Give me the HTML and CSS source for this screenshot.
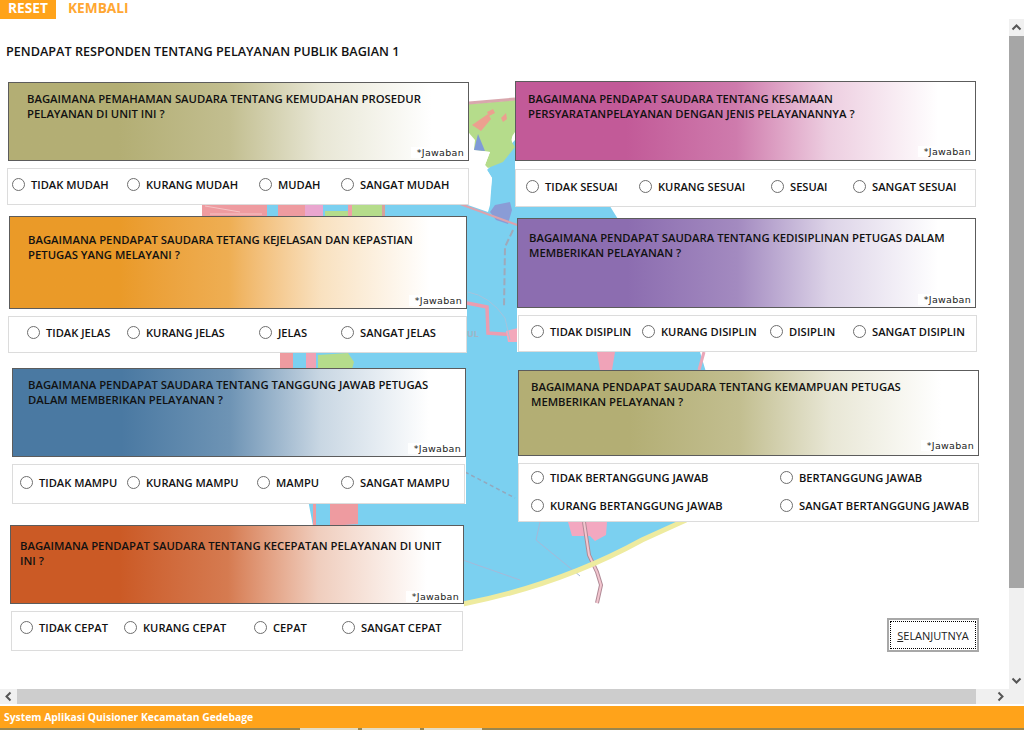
FILE: index.html
```html
<!DOCTYPE html>
<html lang="en">
<head>
    <meta charset="UTF-8">
    <title>Quisioner Kecamatan Gedebage</title>
    <link rel="stylesheet" href="styles.css">
</head>
<body>
    <div class="app">
        <div class="topbar">
            <a class="btn-reset">RESET</a>
            <a class="btn-back">KEMBALI</a>
        </div>
        <div class="work">
            <main class="page">
                <!-- peta di belakang form -->
                <svg class="map" viewBox="0 19 1009 670" width="1009" height="670" aria-hidden="true">
                    <path fill="#7bd0f0" d="M262 203 L608 203 L700 352 L706 372 L686 522 L640 540 Q560 585 463 604 L313 604 L313 526 L280 352 Z"/>
                    <path fill="#7bd0f0" d="M487 170 L515 140 L520 140 L520 230 L488 212 L492 178 Z"/>
                    <path fill="#b5dc8b" d="M469 104 L515 100 L515 132 Q508 140 515 147 L503 162 L488 168 L485 165 L490 152 L474 150 L469 133 Z"/>
                    <g fill="#eca08f">
                        <path d="M472 125 L488 114 L491 119 L481 131 Z"/>
                        <path d="M487 112 L493 109 L495 113 L489 116 Z"/>
                        <path d="M501 118 L506 113 L507 119 L503 122 Z"/>
                    </g>
                    <path fill="#ffffff" d="M469 133 L475 140 L474 150 L490 152 L485 165 L487 170 L492 178 L490 205 L488 212 L462 203 L462 133 Z"/>
                    <path fill="#7f9ad8" d="M474 150 L478 134 L485 151 Z"/>
                    <path fill="#8a9cd6" d="M490 212 L495 205 L510 202 L512 210 L508 224 L496 220 Z"/>
                    <path fill="none" stroke="#d9a7ad" stroke-width="3" d="M469 103 L515 99"/>
                    <path fill="none" stroke="#dca2ad" stroke-width="2" d="M460 204 L520 226"/>

                    <!-- potongan atas, y 205-216 -->
                    <rect x="202" y="203" width="65" height="14" fill="#ee9ba0"/>
                    <rect x="278" y="203" width="27" height="14" fill="#ee9ba0"/>
                    <rect x="305" y="203" width="18" height="14" fill="#e9a6cf"/>
                    <rect x="325" y="211" width="23" height="6" fill="#b5dc8b"/>
                    <rect x="348" y="203" width="4" height="14" fill="#ef9fa6"/>
                    <rect x="352" y="203" width="30" height="14" fill="#b5dc8b"/>
                    <rect x="382" y="203" width="3" height="14" fill="#d8a19b"/>
                    <path fill="none" stroke="#f5c4c6" stroke-width="1" d="M205 206 L240 212 M210 214 L262 214"/>

                    <!-- potongan tengah, y 353-368 -->
                    <rect x="280" y="352" width="13" height="17" fill="#ee9ba0"/>
                    <rect x="306" y="352" width="10" height="17" fill="#f0a2b4"/>
                    <path fill="#b5dc8b" d="M318 355 L348 353 L354 362 L352 369 L318 369 Z"/>
                    <path fill="#f0a3b8" d="M597 352 L615 352 L612 370 L600 370 Z"/>
                    <path fill="none" stroke="#eaa7b8" stroke-width="3" d="M704 352 L699 370"/>

                    <!-- sungai dan jalan -->
                    <path fill="none" stroke="#eb9db0" stroke-width="3.5" d="M467 303 L487 307 L488 333 L517 335"/>
                    <path fill="#f3a8bb" d="M506 331 L518 328 L518 342 L508 342 Z"/>
                    <path fill="none" stroke="#9fa9ba" stroke-width="2" stroke-dasharray="7 3" d="M513 230 L505 247 L504 308"/>
                    <path fill="none" stroke="#a6c3dc" stroke-width="1" d="M468 292 Q490 296 505 318 L510 340"/>
                    <path fill="none" stroke="#93a8bd" stroke-width="1.5" stroke-dasharray="4 3" d="M465 472 L515 498"/>
                    <text class="map-label" x="467" y="337">UL</text>

                    <!-- potongan bawah -->
                    <rect x="313" y="503" width="3" height="23" fill="#ee9ba0"/>
                    <path fill="#ee9ba0" d="M330 503 L358 503 L358 524 L330 526 Z"/>
                    <path fill="#f3a8c0" d="M568 522 L607 522 L606 535 L595 541 L590 536 L572 536 Z"/>
                    <path fill="none" stroke="#b08a96" stroke-width="4" d="M584 522 L589 555 L597 572 L601 585 L597 603"/>
                    <path fill="none" stroke="#f3c6cf" stroke-width="2" d="M584 522 L589 555 L597 572 L601 585 L597 603"/>
                    <path fill="none" stroke="#a5b9d8" stroke-width="1" d="M540 522 L536 540 L580 576 M463 560 L520 580"/>
                    <path fill="none" stroke="#eeeb9f" stroke-width="5" d="M463 604 Q560 585 642 540 L686 520"/>
                </svg>

                <h1 class="title">PENDAPAT RESPONDEN TENTANG PELAYANAN PUBLIK BAGIAN 1</h1>

                <div class="columns">
                    <div class="col col-left">
                        <section class="block block-l1">
                            <div class="card card-olive card-l1">
                                <p>BAGAIMANA PEMAHAMAN SAUDARA TENTANG KEMUDAHAN PROSEDUR PELAYANAN DI UNIT INI ?</p>
                                <span class="hint">*Jawaban</span>
                            </div>
                            <div class="answers answers-l1">
                                <label><input type="radio" name="l1">TIDAK MUDAH</label>
                                <label><input type="radio" name="l1">KURANG MUDAH</label>
                                <label><input type="radio" name="l1">MUDAH</label>
                                <label><input type="radio" name="l1">SANGAT MUDAH</label>
                            </div>
                        </section>

                        <section class="block block-l2">
                            <div class="card card-orange card-l2">
                                <p>BAGAIMANA PENDAPAT SAUDARA TETANG KEJELASAN DAN KEPASTIAN PETUGAS YANG MELAYANI ?</p>
                                <span class="hint">*Jawaban</span>
                            </div>
                            <div class="answers answers-l2">
                                <label><input type="radio" name="l2">TIDAK JELAS</label>
                                <label><input type="radio" name="l2">KURANG JELAS</label>
                                <label><input type="radio" name="l2">JELAS</label>
                                <label><input type="radio" name="l2">SANGAT JELAS</label>
                            </div>
                        </section>

                        <section class="block block-l3">
                            <div class="card card-blue card-l3">
                                <p>BAGAIMANA PENDAPAT SAUDARA TENTANG TANGGUNG JAWAB PETUGAS DALAM MEMBERIKAN PELAYANAN ?</p>
                                <span class="hint">*Jawaban</span>
                            </div>
                            <div class="answers answers-l3">
                                <label><input type="radio" name="l3">TIDAK MAMPU</label>
                                <label><input type="radio" name="l3">KURANG MAMPU</label>
                                <label><input type="radio" name="l3">MAMPU</label>
                                <label><input type="radio" name="l3">SANGAT MAMPU</label>
                            </div>
                        </section>

                        <section class="block block-l4">
                            <div class="card card-rust card-l4">
                                <p>BAGAIMANA PENDAPAT SAUDARA TENTANG KECEPATAN PELAYANAN DI UNIT INI ?</p>
                                <span class="hint">*Jawaban</span>
                            </div>
                            <div class="answers answers-l4">
                                <label><input type="radio" name="l4">TIDAK CEPAT</label>
                                <label><input type="radio" name="l4">KURANG CEPAT</label>
                                <label><input type="radio" name="l4">CEPAT</label>
                                <label><input type="radio" name="l4">SANGAT CEPAT</label>
                            </div>
                        </section>
                    </div>

                    <div class="col col-right">
                        <section class="block block-r1">
                            <div class="card card-pink card-r1">
                                <p>BAGAIMANA PENDAPAT SAUDARA TENTANG KESAMAAN PERSYARATANPELAYANAN DENGAN JENIS PELAYANANNYA ?</p>
                                <span class="hint">*Jawaban</span>
                            </div>
                            <div class="answers answers-r1">
                                <label><input type="radio" name="r1">TIDAK SESUAI</label>
                                <label><input type="radio" name="r1">KURANG SESUAI</label>
                                <label><input type="radio" name="r1">SESUAI</label>
                                <label><input type="radio" name="r1">SANGAT SESUAI</label>
                            </div>
                        </section>

                        <section class="block block-r2">
                            <div class="card card-purple card-r2">
                                <p>BAGAIMANA PENDAPAT SAUDARA TENTANG KEDISIPLINAN PETUGAS DALAM MEMBERIKAN PELAYANAN ?</p>
                                <span class="hint">*Jawaban</span>
                            </div>
                            <div class="answers answers-r2">
                                <label><input type="radio" name="r2">TIDAK DISIPLIN</label>
                                <label><input type="radio" name="r2">KURANG DISIPLIN</label>
                                <label><input type="radio" name="r2">DISIPLIN</label>
                                <label><input type="radio" name="r2">SANGAT DISIPLIN</label>
                            </div>
                        </section>

                        <section class="block block-r3">
                            <div class="card card-olive card-r3">
                                <p>BAGAIMANA PENDAPAT SAUDARA TENTANG KEMAMPUAN PETUGAS MEMBERIKAN PELAYANAN ?</p>
                                <span class="hint">*Jawaban</span>
                            </div>
                            <div class="answers answers-r3">
                                <label><input type="radio" name="r3">TIDAK BERTANGGUNG JAWAB</label>
                                <label><input type="radio" name="r3">BERTANGGUNG JAWAB</label>
                                <label><input type="radio" name="r3">KURANG BERTANGGUNG JAWAB</label>
                                <label><input type="radio" name="r3">SANGAT BERTANGGUNG JAWAB</label>
                            </div>
                        </section>

                        <button class="btn-next"><u>S</u>ELANJUTNYA</button>
                    </div>
                </div>
            </main>

            <div class="vbar">
                <svg class="arrow" viewBox="0 0 15 17" width="15" height="17"><path d="M3.5 10.5 L7.5 6.5 L11.5 10.5" fill="none" stroke="#555" stroke-width="2"/></svg>
                <div class="vbar-thumb"></div>
                <div class="vbar-track"></div>
                <svg class="arrow" viewBox="0 0 15 17" width="15" height="17"><path d="M3.5 6.5 L7.5 10.5 L11.5 6.5" fill="none" stroke="#555" stroke-width="2"/></svg>
            </div>
        </div>

        <div class="hbar">
            <svg class="arrow" viewBox="0 0 17 15" width="17" height="15"><path d="M10.5 3.5 L6.5 7.5 L10.5 11.5" fill="none" stroke="#555" stroke-width="2"/></svg>
            <div class="hbar-thumb"></div>
            <svg class="arrow arrow-end" viewBox="0 0 17 15" width="17" height="15"><path d="M6.5 3.5 L10.5 7.5 L6.5 11.5" fill="none" stroke="#555" stroke-width="2"/></svg>
        </div>

        <footer class="footer">System Aplikasi Quisioner Kecamatan Gedebage</footer>
        <div class="taskbar">
            <span></span>
            <span></span>
            <span></span>
        </div>
    </div>
</body>
</html>
```

FILE: styles.css
```css
*{
    box-sizing: border-box;
}
html, body{
    margin: 0;
    height: 100%;
    overflow: hidden;
    background: white;
}
body{
    font-family: "Open Sans", "Noto Sans", sans-serif;
    color: #111;
}
.app{
    display: flex;
    flex-direction: column;
    width: 1024px;
    height: 730px;
}

/* top */
.topbar{
    display: flex;
    height: 19px;
    font-size: 13.7px;
    font-weight: 700;
    line-height: 16px;
}
.btn-reset{
    width: 56px;
    padding-left: 8px;
    background: #ffa31a;
    color: white;
}
.btn-back{
    margin-left: 12px;
    color: #ffa733;
}

/* content */
.work{
    display: flex;
    height: 670px;
}
.page{
    position: relative;
    width: 1009px;
    height: 670px;
    overflow: hidden;
}
.map{
    position: absolute;
    top: 0;
    left: 0;
}
.map-label{
    font-size: 9px;
    font-weight: 700;
    fill: #9fb6c6;
}
.title{
    position: relative;
    margin: 0;
    padding: 24px 0 0 6px;
    height: 62px;
    font-size: 12.65px;
    font-weight: 600;
    line-height: 17px;
    color: #111;
}
.columns{
    position: relative;
    display: flex;
}
.col-left{
    width: 515px;
    padding-top: 1px;
}
.col-right{
    width: 494px;
}

/* question block */
.block{
    display: flex;
    flex-direction: column;
    gap: 7px;
    background: white;
}
.block-l1{
    margin-left: 7px;
    width: 462px;
}
.block-l2{
    margin-left: 8px;
    margin-top: 11px;
    width: 459px;
}
.block-l3{
    margin-left: 12px;
    margin-top: 15px;
    width: 454px;
}
.block-l4{
    margin-left: 10px;
    margin-top: 21px;
    width: 454px;
}
.block-r1{
    width: 461px;
    gap: 8px;
}
.block-r2{
    margin-left: 2px;
    margin-top: 11px;
    width: 460px;
}
.block-r3{
    margin-left: 3px;
    margin-top: 18px;
    width: 461px;
}

.card{
    position: relative;
    border: 1px solid #5c5c5c;
    background: linear-gradient(to right, var(--tone) 24%, color-mix(in srgb, var(--tone) 80%, white) 48%, color-mix(in srgb, var(--tone) 30%, white) 68%, white 92%);
}
.card p{
    margin: 0;
    font-size: 11.3px;
    font-weight: 600;
    line-height: 15px;
    color: #111;
}
.card-olive{
    --tone: #b3ae74;
}
.card-pink{
    --tone: #c25a98;
}
.card-orange{
    --tone: #ea9a28;
}
.card-purple{
    --tone: #8c6db0;
}
.card-blue{
    --tone: #4a79a2;
}
.card-rust{
    --tone: #cb5a25;
}
.card-l1{
    margin-left: 1px;
    width: 461px;
    height: 79px;
    padding: 8px 40px 0 18px;
}
.card-l2{
    margin-left: 1px;
    width: 458px;
    height: 93px;
    padding: 15px 40px 0 18px;
}
.card-l3{
    width: 454px;
    height: 89px;
    padding: 8px 30px 0 15px;
}
.card-l4{
    width: 454px;
    height: 79px;
    padding: 12px 20px 0 9px;
}
.card-r1{
    width: 461px;
    height: 80px;
    padding: 9px 60px 0 12px;
}
.card-r2{
    width: 459px;
    height: 90px;
    padding: 11px 20px 0 11px;
}
.card-r3{
    width: 461px;
    height: 86px;
    padding: 8px 60px 0 12px;
}
.hint{
    position: absolute;
    right: 0;
    bottom: 2px;
    padding: 0 4px 0 6px;
    background: rgba(255, 255, 255, .9);
    font-family: "DejaVu Sans", sans-serif;
    font-size: 9.5px;
    line-height: 11px;
    letter-spacing: .3px;
    color: #222;
}
.card-r3 .hint{
    bottom: 4px;
}
.card-r1 .hint{
    bottom: 3px;
}
.card-l4 .hint{
    bottom: 1px;
}

/* answers */
.answers{
    display: grid;
    align-items: center;
    border: 1px solid #dcdcdc;
    background: white;
    font-size: 11.15px;
    font-weight: 600;
}
.answers label{
    display: flex;
    align-items: center;
    gap: 6px;
    white-space: nowrap;
}
.answers input{
    appearance: none;
    flex: none;
    width: 13px;
    height: 13px;
    margin: 0;
    border: 1px solid #6e6e6e;
    border-radius: 50%;
    background: white;
}
.answers-l1{
    grid-template-columns: 115px 132px 82px 1fr;
    height: 37px;
    padding: 0 0 4px 4px;
}
.answers-l2{
    grid-template-columns: 100px 132px 82px 1fr;
    height: 37px;
    padding: 0 0 4px 18px;
}
.answers-l3{
    grid-template-columns: 107px 130px 84px 1fr;
    width: 453px;
    height: 40px;
    padding: 0 0 4px 7px;
}
.answers-l4{
    grid-template-columns: 104px 130px 88px 1fr;
    margin-left: 1px;
    width: 452px;
    height: 40px;
    padding: 0 0 8px 8px;
}
.answers-r1{
    grid-template-columns: 113px 132px 82px 1fr;
    height: 38px;
    padding: 0 0 4px 10px;
}
.answers-r2{
    grid-template-columns: 111px 128px 83px 1fr;
    margin-left: 1px;
    width: 459px;
    height: 37px;
    padding: 0 0 5px 12px;
}
.answers-r3{
    grid-template-columns: 249px 1fr;
    grid-auto-rows: 28px;
    align-content: center;
    height: 59px;
    padding: 0 0 2px 12px;
}

.btn-next{
    display: block;
    margin: 96px 0 0 372px;
    width: 92px;
    height: 34px;
    padding: 0;
    border: 2px solid #a8a8a8;
    outline: 1px dotted black;
    outline-offset: -4px;
    background: white;
    font-family: inherit;
    font-size: 11px;
    color: #222;
}

/* scrollbars */
.arrow{
    display: block;
    flex: none;
}
.vbar{
    display: flex;
    flex-direction: column;
    width: 15px;
    background: #f0f0f0;
}
.vbar-thumb{
    height: 552px;
    background: #a6a6a6;
}
.vbar-track{
    flex: 1;
}
.hbar{
    display: flex;
    height: 15px;
    background: #f0f0f0;
}
.hbar-thumb{
    width: 959px;
    background: #cdcdcd;
}
.arrow-end{
    margin-left: 16px;
}

/* bottom */
.footer{
    margin-top: 2px;
    height: 22px;
    padding-left: 4px;
    background: #ffa31a;
    color: white;
    font-size: 10.35px;
    font-weight: 700;
    line-height: 22px;
}
.taskbar{
    display: flex;
    gap: 4px;
    height: 2px;
    padding-left: 300px;
    background: #9a8650;
}
.taskbar span{
    width: 58px;
    background: #e4dcc4;
}
```
